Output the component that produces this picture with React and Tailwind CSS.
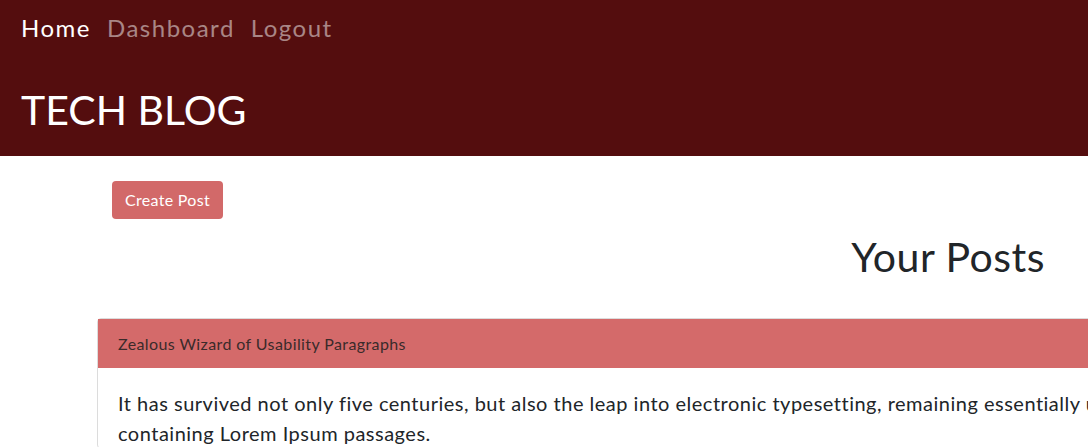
import React from 'react';

const App = () => {
  return (
    <div className="min-h-screen w-full overflow-hidden bg-white font-['Lato',sans-serif]">
      {/* Top bar */}
      <header className="h-[156px] bg-[#540d0e] px-[21px]">
        <nav className="flex gap-[16px] pt-[12px] text-[24px] leading-[32px] tracking-[1.5px]">
          <a className="text-white">Home</a>
          <a className="text-white/50">Dashboard</a>
          <a className="text-white/50">Logout</a>
        </nav>
        <h1 className="mt-[42px] text-[41px] leading-[48px] text-white">TECH BLOG</h1>
      </header>

      <main>
        <div className="pl-[112px] pt-[25px]">
          <button className="h-[38px] w-[111px] rounded-[4px] bg-[#d26969] text-[16px] tracking-[0.3px] text-white">
            Create Post
          </button>
        </div>

        <div className="flex justify-end pr-[43px] pt-[14px]">
          <h2 className="text-[41px] leading-[48px] tracking-[0.5px] text-[#212529]">Your Posts</h2>
        </div>

        <div className="ml-[97px] mt-[37px] w-[1200px] rounded-[4px] border border-[#dcdcdc]">
          <div className="flex h-[49px] items-center bg-[#d46a6a] px-[20px] text-[16px] tracking-[0.4px] text-[#3a2a2a]">
            Zealous Wizard of Usability Paragraphs
          </div>
          <div className="px-[20px] pt-[20px] text-[20px] leading-[30px] tracking-[0.5px] text-[#212529]">
            <p className="whitespace-nowrap">
              It has survived not only five centuries, but also the leap into electronic typesetting, remaining essentially unchanged. It was popularised in the 1960s with the release of Letraset sheets
            </p>
            <p>containing Lorem Ipsum passages.</p>
          </div>
        </div>
      </main>
    </div>
  );
};

export default App;
